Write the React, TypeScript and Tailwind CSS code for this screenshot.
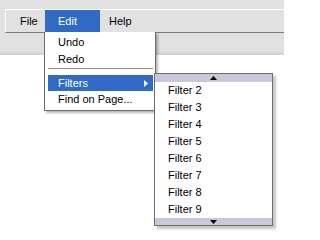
import React from "react";

// --- Classic menubar with an open Edit menu and a scrolling Filters submenu ---

const filters = ["Filter 2", "Filter 3", "Filter 4", "Filter 5", "Filter 6", "Filter 7", "Filter 8", "Filter 9"];

export default function App() {
  return (
    <div
      className="relative w-[284px] h-[238px] overflow-hidden bg-white text-[11px] text-black"
      style={{ fontFamily: '"Liberation Sans", Arial, sans-serif' }}
    >
      {/* toolbar area */}
      <div className="h-[9px] bg-[#e1e1e1]" />
      <div className="flex bg-[#e1e1e1]">
        <div className="w-[5px]" />
        <div className="flex flex-1 h-[24px] items-stretch border-t border-l border-white border-b border-b-[#7a7a7a] bg-[#e1e1e1]">
          <div className="w-[39px] pl-[14px] flex items-center">File</div>
          <div className="w-[55px] pl-[13px] flex items-center bg-[#316ac5] text-white">Edit</div>
          <div className="pl-[9px] flex items-center">Help</div>
        </div>
      </div>
      <div className="h-[19px] bg-[#e1e1e1]" />
      <div className="h-[3px] bg-gradient-to-b from-[#dcdcdc] to-[#cfcfcf]" />

      {/* Edit dropdown */}
      <div className="absolute left-[44px] top-[32px] w-[112px] z-10 bg-white border-l border-r border-b border-[#6e6e6e] pt-[2px] pb-[2px] shadow-[2px_2px_2px_rgba(0,0,0,0.28)]">
        <div className="h-[17px] pl-[13px] flex items-center">Undo</div>
        <div className="h-[17px] pl-[13px] flex items-center">Redo</div>
        <div className="ml-[3px] mr-[2px] h-px bg-[#8a8a8a] mb-[6px]" />
        <div className="ml-[3px] mr-[2px] h-[16px] pl-[10px] pr-[5px] flex items-center justify-between bg-[#316ac5] text-white">
          <span>Filters</span>
          <svg width="4" height="7" viewBox="0 0 4 7">
            <polygon points="0,0 4,3.5 0,7" fill="#ffffff" />
          </svg>
        </div>
        <div className="h-[17px] pl-[13px] flex items-center">Find on Page...</div>
      </div>

      {/* Filters submenu */}
      <div className="absolute left-[154px] top-[73px] w-[119px] z-20 bg-white border border-[#6e6e6e] shadow-[3px_3px_2px_rgba(0,0,0,0.22)]">
        <div className="h-[8px] bg-[#c9c7d8] flex items-center justify-center">
          <svg width="7" height="4" viewBox="0 0 7 4">
            <polygon points="3.5,0 7,4 0,4" fill="#000000" />
          </svg>
        </div>
        {filters.map((f) => (
          <div key={f} className="h-[17px] pl-[13px] flex items-center">
            {f}
          </div>
        ))}
        <div className="h-[7px] bg-[#c9c7d8] flex items-center justify-center">
          <svg width="7" height="4" viewBox="0 0 7 4">
            <polygon points="0,0 7,0 3.5,4" fill="#000000" />
          </svg>
        </div>
      </div>
    </div>
  );
}
